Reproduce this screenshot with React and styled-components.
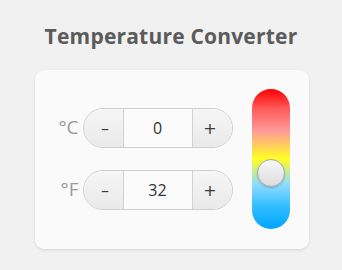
import styled, { createGlobalStyle } from 'styled-components';
import { useState } from 'react';

const GlobalStyle = createGlobalStyle`
  html, body {
    margin: 0;
    padding: 0;
    background: #f1f1f1;
  }
  body {
    font-family: 'Open Sans', 'DejaVu Sans', sans-serif;
  }
`;

const Page = styled.div`
  width: 342px;
  height: 270px;
  display: flex;
  flex-direction: column;
  align-items: center;
`;

const Title = styled.h1`
  margin: 20px 0 0;
  height: 32px;
  font-size: 21px;
  line-height: 32px;
  font-weight: 700;
  color: #5b5b5b;
  letter-spacing: 0.2px;
`;

const Card = styled.div`
  margin-top: 18px;
  margin-left: 1px;
  width: 274px;
  height: 179px;
  box-sizing: border-box;
  padding: 19px 19px 20px 21px;
  background: #fafafa;
  border-radius: 9px;
  box-shadow: 0 1px 3px rgba(0, 0, 0, 0.12);
  display: flex;
  align-items: center;
`;

const Rows = styled.div`
  display: flex;
  flex-direction: column;
  gap: 22px;
`;

const Row = styled.div`
  display: flex;
  align-items: center;
  gap: 4px;
`;

const Unit = styled.span`
  width: 23px;
  font-size: 19px;
  color: #9a9a9a;
  text-align: right;
  padding-bottom: 2px;
`;

const Stepper = styled.div`
  display: flex;
  height: 40px;
  width: 150px;
  box-sizing: border-box;
  border: 1px solid #cfcfcf;
  border-radius: 20px;
  overflow: hidden;
  background: #fbfbfb;
`;

const StepButton = styled.button`
  width: 40px;
  border: 0;
  ${(p) => (p.side === 'left' ? 'border-right' : 'border-left')}: 1px solid #d2d2d2;
  background: linear-gradient(#f6f6f6, #e9e9e9);
  color: #3a3a3a;
  font-family: 'DejaVu Sans', sans-serif;
  font-size: 16px;
  padding: ${(p) => (p.side === 'left' ? '0 0 0 4px' : '0 4px 0 0')};
  cursor: pointer;
`;

const Value = styled.div`
  flex: 1;
  display: flex;
  align-items: center;
  justify-content: center;
  font-size: 16px;
  color: #333;
`;

const Slider = styled.div`
  margin-left: auto;
  position: relative;
  width: 38px;
  height: 140px;
  border-radius: 19px;
  background: linear-gradient(
    #ff0000 0%,
    #ff5a5a 14%,
    #ff9a9a 30%,
    #ffff22 50%,
    #8fdcff 68%,
    #2ebbff 85%,
    #00a6ff 100%
  );
`;

const Thumb = styled.div`
  position: absolute;
  left: 5px;
  width: 26px;
  height: 26px;
  border-radius: 50%;
  border: 1px solid #a8a8a8;
  background: linear-gradient(#f8f8f8, #dcdcdc);
  box-shadow: 0 1px 2px rgba(0, 0, 0, 0.2);
`;

const Field = ({ unit, value, onChange }) => (
  <Row>
    <Unit>{unit}</Unit>
    <Stepper>
      <StepButton side="left" onClick={() => onChange(value - 1)}>–</StepButton>
      <Value>{value}</Value>
      <StepButton side="right" onClick={() => onChange(value + 1)}>+</StepButton>
    </Stepper>
  </Row>
);

const App = () => {
  const [celsius, setCelsius] = useState(0);
  const fahrenheit = Math.round((celsius * 9) / 5 + 32);

  return (
    <>
      <GlobalStyle />
      <Page>
        <Title>Temperature Converter</Title>
        <Card>
          <Rows>
            <Field unit="°C" value={celsius} onChange={setCelsius} />
            <Field
              unit="°F"
              value={fahrenheit}
              onChange={(f) => setCelsius(Math.round(((f - 32) * 5) / 9))}
            />
          </Rows>
          <Slider>
            <Thumb style={{ top: 70 }} />
          </Slider>
        </Card>
      </Page>
    </>
  );
};

export default App;
